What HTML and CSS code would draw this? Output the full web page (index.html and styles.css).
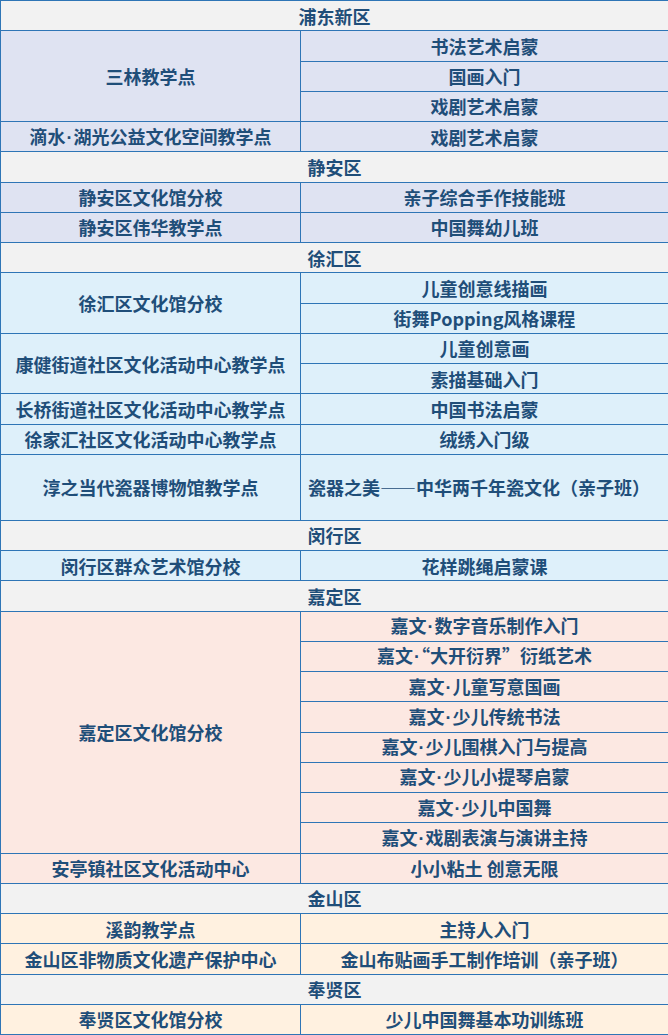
FILE: index.html
```html
<!DOCTYPE html>
<html lang="zh-CN">
<head>
<meta charset="utf-8">
<title>课程表</title>
<link rel="stylesheet" href="styles.css">
</head>
<body>
<table class="courses">
  <colgroup><col class="c-left"><col class="c-right"></colgroup>
  <tbody>
    <tr class="district"><td colspan="2">浦东新区</td></tr>
    <tr class="pd"><td rowspan="3">三林教学点</td><td>书法艺术启蒙</td></tr>
    <tr class="pd"><td>国画入门</td></tr>
    <tr class="pd"><td>戏剧艺术启蒙</td></tr>
    <tr class="pd"><td>滴水<span class="dot">·</span>湖光公益文化空间教学点</td><td>戏剧艺术启蒙</td></tr>

    <tr class="district"><td colspan="2">静安区</td></tr>
    <tr class="pd"><td>静安区文化馆分校</td><td>亲子综合手作技能班</td></tr>
    <tr class="pd"><td>静安区伟华教学点</td><td>中国舞幼儿班</td></tr>

    <tr class="district"><td colspan="2">徐汇区</td></tr>
    <tr class="xh"><td rowspan="2">徐汇区文化馆分校</td><td>儿童创意线描画</td></tr>
    <tr class="xh"><td>街舞Popping风格课程</td></tr>
    <tr class="xh"><td rowspan="2">康健街道社区文化活动中心教学点</td><td>儿童创意画</td></tr>
    <tr class="xh"><td>素描基础入门</td></tr>
    <tr class="xh"><td>长桥街道社区文化活动中心教学点</td><td>中国书法启蒙</td></tr>
    <tr class="xh"><td>徐家汇社区文化活动中心教学点</td><td>绒绣入门级</td></tr>
    <tr class="xh tall"><td>淳之当代瓷器博物馆教学点</td><td class="left">瓷器之美——中华两千年瓷文化（亲子班）</td></tr>

    <tr class="district"><td colspan="2">闵行区</td></tr>
    <tr class="xh"><td>闵行区群众艺术馆分校</td><td>花样跳绳启蒙课</td></tr>

    <tr class="district"><td colspan="2">嘉定区</td></tr>
    <tr class="jd"><td rowspan="8">嘉定区文化馆分校</td><td>嘉文<span class="dot">·</span>数字音乐制作入门</td></tr>
    <tr class="jd"><td>嘉文<span class="dot">·</span>“大开衍界”衍纸艺术</td></tr>
    <tr class="jd"><td>嘉文<span class="dot">·</span>儿童写意国画</td></tr>
    <tr class="jd"><td>嘉文<span class="dot">·</span>少儿传统书法</td></tr>
    <tr class="jd"><td>嘉文<span class="dot">·</span>少儿围棋入门与提高</td></tr>
    <tr class="jd"><td>嘉文<span class="dot">·</span>少儿小提琴启蒙</td></tr>
    <tr class="jd"><td>嘉文<span class="dot">·</span>少儿中国舞</td></tr>
    <tr class="jd"><td>嘉文<span class="dot">·</span>戏剧表演与演讲主持</td></tr>
    <tr class="jd"><td>安亭镇社区文化活动中心</td><td>小小粘土 创意无限</td></tr>

    <tr class="district"><td colspan="2">金山区</td></tr>
    <tr class="js"><td>溪韵教学点</td><td>主持人入门</td></tr>
    <tr class="js"><td>金山区非物质文化遗产保护中心</td><td>金山布贴画手工制作培训（亲子班）</td></tr>

    <tr class="district"><td colspan="2">奉贤区</td></tr>
    <tr class="js"><td>奉贤区文化馆分校</td><td>少儿中国舞基本功训练班</td></tr>
  </tbody>
</table>
</body>
</html>
```
FILE: styles.css
```css
html, body {
  margin: 0;
  padding: 0;
  background: #ffffff;
}

.courses {
  width: 668px;
  border-collapse: collapse;
  table-layout: fixed;
  font-family: "Noto Sans CJK SC", "Noto Sans", sans-serif;
  font-size: 18px;
  font-weight: 700;
  color: #1f4e79;
}

.c-left { width: 300px; }
.c-right { width: 368px; }

.courses tr { height: 30.25px; }
.courses tr.tall { height: 66px; }

.courses td {
  border: 1px solid #2e75b6;
  padding: 0 4px;
  text-align: center;
  vertical-align: middle;
  line-height: 20px;
  white-space: nowrap;
}

.courses td.left {
  text-align: left;
  padding-left: 7px;
}

.dot {
  font-family: "Liberation Sans", sans-serif;
  padding: 0 1px;
}

.district td { background: #f2f2f2; }
.pd td { background: #dfe3f2; }
.xh td { background: #def0fa; }
.jd td { background: #fce8e2; }
.js td { background: #fff1e0; }
```
